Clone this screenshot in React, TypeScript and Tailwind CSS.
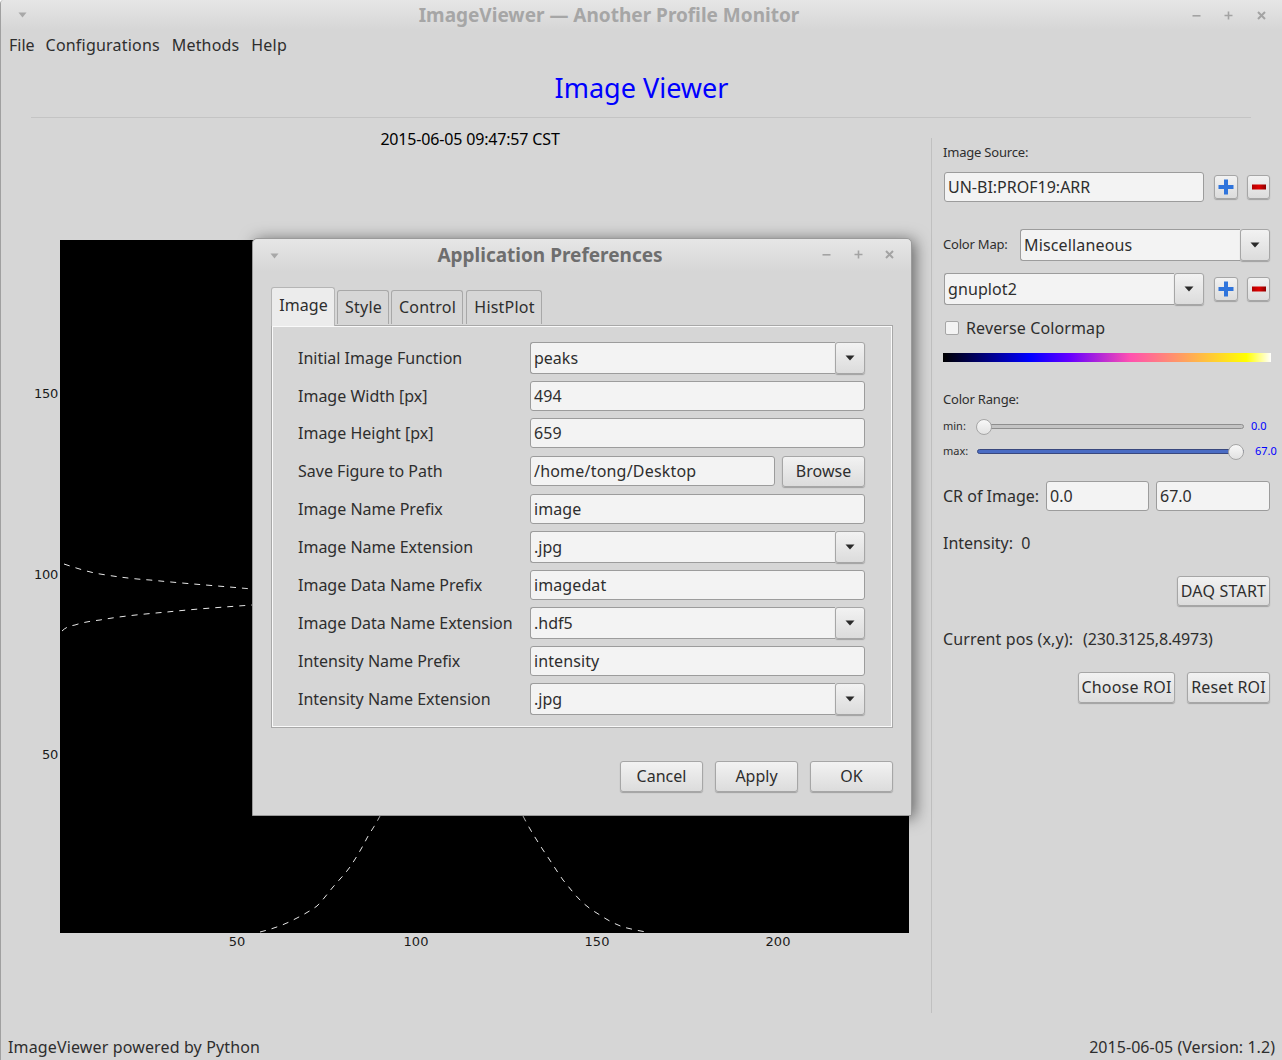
import React from "react";

const Arrow = () => (
  <svg width="10" height="6" viewBox="0 0 10 6"><path d="M0.5 0.5H9.5L5 5.5Z" fill="#2a2a2a" /></svg>
);

const btn = "bg-gradient-to-b from-[#f2f2f2] to-[#dcdcdc] border border-[#a6a6a6] rounded-[3px] shadow-[0_1px_1px_rgba(0,0,0,0.25)] text-[#2e2e2e] flex items-center justify-center";

function Field({ value, className = "" }: { value: string; className?: string }) {
  return (
    <div className={`h-[30px] bg-[#f3f3f3] border border-[#9c9c9c] rounded-[3px] pl-[3px] flex items-center text-[#2e2e2e] ${className}`}>
      {value}
    </div>
  );
}

function Combo({ value, className = "" }: { value: string; className?: string }) {
  return (
    <div className={`h-[32px] flex ${className}`}>
      <div className="flex-1 bg-[#f3f3f3] border border-r-0 border-[#9c9c9c] rounded-l-[3px] pl-[3px] flex items-center text-[#2e2e2e]">{value}</div>
      <div className={`w-[30px] ${btn}`}><Arrow /></div>
    </div>
  );
}

function PlusMinus() {
  return (
    <div className="flex gap-[9px]">
      <div className={`w-[24px] h-[24px] ${btn}`}>
        <svg width="16" height="16" viewBox="0 0 16 16">
          <path d="M6 0.5H10V6H15.5V10H10V15.5H6V10H0.5V6H6Z" fill="#2f74dc" />
        </svg>
      </div>
      <div className={`w-[23px] h-[24px] ${btn}`}>
        <svg width="14" height="6" viewBox="0 0 14 6">
          <defs>
            <linearGradient id="red" x1="0" x2="1" y1="0" y2="0">
              <stop offset="0" stopColor="#b00000" />
              <stop offset="0.5" stopColor="#e00000" />
              <stop offset="1" stopColor="#8c0000" />
            </linearGradient>
          </defs>
          <rect x="0" y="0.5" width="14" height="5" fill="url(#red)" />
        </svg>
      </div>
    </div>
  );
}

function WinButtons({ lastGap }: { lastGap: string }) {
  return (
    <div className="flex items-center">
      <svg width="9" height="9" viewBox="0 0 9 9"><rect x="0.5" y="4" width="8" height="1.6" fill="#a3a3a3" /></svg>
      <svg className="ml-[23px]" width="9" height="9" viewBox="0 0 9 9"><path d="M3.7 0.5H5.3V3.7H8.5V5.3H5.3V8.5H3.7V5.3H0.5V3.7H3.7Z" fill="#a3a3a3" /></svg>
      <svg className={lastGap} width="9" height="9" viewBox="0 0 9 9"><path d="M1 1L8 8M8 1L1 8" stroke="#a3a3a3" strokeWidth="2" /></svg>
    </div>
  );
}

function MenuTriangle() {
  return <svg width="9" height="6" viewBox="0 0 9 6"><path d="M0.5 0.5H8.5L4.5 5.5Z" fill="#a8a8a8" /></svg>;
}

function Slider({ label, value, max }: { label: string; value: string; max?: boolean }) {
  return (
    <div className="flex items-center h-[25px] text-[11px] text-[#2e2e2e] whitespace-nowrap">
      <span className="w-[34px] shrink-0">{label}</span>
      <div className={`relative w-[267px] shrink-0 h-[5px] rounded-full border ${max ? "border-[#39487e] bg-[#4a6cc4]" : "border-[#8e8e8e] bg-[#c4c4c4]"}`}>
        <div className={`absolute top-[-6px] w-[16px] h-[16px] rounded-full border border-[#a6a6a6] bg-gradient-to-b from-[#f8f8f8] to-[#e2e2e2] ${max ? "right-[-1px]" : "left-[-2px]"}`} />
      </div>
      <span className={`text-[#0000ff] ${max ? "ml-[11px]" : "ml-[7px]"}`}>{value}</span>
    </div>
  );
}

const tickX = [
  { t: "50", x: 177 },
  { t: "100", x: 356 },
  { t: "150", x: 537 },
  { t: "200", x: 718 },
];
const tickY = [
  { t: "150", y: 154 },
  { t: "100", y: 335 },
  { t: "50", y: 515 },
];

const rows: { label: string; kind: "combo" | "field" | "browse"; value: string }[] = [
  { label: "Initial Image Function", kind: "combo", value: "peaks" },
  { label: "Image Width [px]", kind: "field", value: "494" },
  { label: "Image Height [px]", kind: "field", value: "659" },
  { label: "Save Figure to Path", kind: "browse", value: "/home/tong/Desktop" },
  { label: "Image Name Prefix", kind: "field", value: "image" },
  { label: "Image Name Extension", kind: "combo", value: ".jpg" },
  { label: "Image Data Name Prefix", kind: "field", value: "imagedat" },
  { label: "Image Data Name Extension", kind: "combo", value: ".hdf5" },
  { label: "Intensity Name Prefix", kind: "field", value: "intensity" },
  { label: "Intensity Name Extension", kind: "combo", value: ".jpg" },
];

function Dialog() {
  return (
    <div className="absolute left-[251px] top-[238px] w-[660px] h-[578px] bg-[#d6d6d6] border border-[#9a9a9a] rounded-t-[5px] shadow-[3px_2px_16px_rgba(0,0,0,0.55)] px-[18px] flex flex-col">
      <div className="h-[33px] -mx-[18px] px-[17px] relative flex items-center bg-gradient-to-b from-[#e6e6e6] to-[#d6d6d6] rounded-t-[5px]">
        <MenuTriangle />
        <span className="absolute left-0 right-[64px] text-center text-[19px] font-bold text-[#6e6e6e]">Application Preferences</span>
        <div className="ml-auto pb-[2px]"><WinButtons lastGap="ml-[22px]" /></div>
      </div>
      <div className="flex items-end h-[39px] mt-[15px] -mb-px relative z-10">
        <div className="w-[64px] h-[39px] pb-[5px] pl-[1px] tracking-[0.1px] bg-[#ececec] border border-[#b5b5b5] border-b-0 rounded-t-[3px] flex items-center justify-center text-[#2e2e2e]">Image</div>
        {[
          { t: "Style", w: "w-[52px] ml-[2px]" },
          { t: "Control", w: "w-[72px] ml-[2px]" },
          { t: "HistPlot", w: "w-[76px] ml-[3px]" },
        ].map((tab) => (
          <div key={tab.t} className={`${tab.w} h-[34px] mb-[2px] pb-[2px] pl-[1px] tracking-[0.2px] bg-[#d6d6d6] border border-[#a8a8a8] border-b-0 rounded-t-[3px] flex items-center justify-center text-[#2e2e2e]`}>{tab.t}</div>
        ))}
      </div>
      <div className="w-[622px] h-[403px] border border-[#a8a8a8] shadow-[inset_1px_1px_0_#fafafa,inset_-1px_-1px_0_#fafafa] pl-[26px] pr-[27px] pt-[12.7px]">
        {rows.map((r) => (
          <div key={r.label} className="h-[37.9px] flex items-center">
            <span className="w-[232px] text-[#2e2e2e] whitespace-nowrap">{r.label}</span>
            {r.kind === "combo" && <Combo value={r.value} className="w-[335px]" />}
            {r.kind === "field" && <Field value={r.value} className="w-[335px] tracking-[0.1px]" />}
            {r.kind === "browse" && (
              <div className="flex w-[335px] gap-[7px]">
                <Field value={r.value} className="flex-1 tracking-[0.2px]" />
                <div className={`w-[83px] h-[31px] pb-px ${btn}`}>Browse</div>
              </div>
            )}
          </div>
        ))}
      </div>
      <div className="flex justify-end gap-[12px] mt-[33px]">
        {["Cancel", "Apply", "OK"].map((b) => (
          <div key={b} className={`w-[83px] h-[31px] pb-px ${btn}`}>{b}</div>
        ))}
      </div>
    </div>
  );
}

export default function App() {
  return (
    <div className="relative w-[1282px] h-[1060px] overflow-hidden bg-[#d6d6d6] border-l border-[#a0a0a0] rounded-tl-[4px] font-['Noto_Sans',sans-serif] text-[16px] flex flex-col text-[#2e2e2e]">
      <div className="h-[30px] relative flex items-center px-[17px] bg-gradient-to-b from-[#e6e6e6] to-[#d6d6d6]">
        <MenuTriangle />
        <span className="absolute left-0 right-[65px] text-center text-[19px] font-bold text-[#a6a6a6]">ImageViewer — Another Profile Monitor</span>
        <div className="ml-auto mr-[-1px]"><WinButtons lastGap="ml-[24px]" /></div>
      </div>
      <div className="h-[30px] flex items-center pl-[8px] gap-[12px]">
        <span className="-mr-px">File</span>
        <span className="tracking-[0.2px]">Configurations</span>
        <span className="tracking-[0.15px]">Methods</span>
        <span className="tracking-[0.2px]">Help</span>
      </div>
      <div className="h-[58px] ml-[30px] w-[1220px] pl-[1px] border-b border-[#c4c4c4] flex items-center justify-center text-[27px] text-[#0000ff]">Image Viewer</div>
      <div className="flex h-[895px] pt-[20px]">
        <div className="w-[931px] shrink-0 h-[875px] border-r border-[#c0c0c0] flex flex-col">
          <div className="pl-[8px] text-center text-black leading-[22px] -mt-[10px] tracking-[-0.17px]">2015-06-05 09:47:57 CST</div>
          <div className="relative ml-[59px] mt-[90px] w-[849px] h-[693px] bg-black font-['DejaVu_Sans',sans-serif] text-[13px] text-[#1a1a1a]">
            <svg className="absolute inset-0" width="849" height="693" viewBox="60 240 849 693">
              <g fill="none" stroke="#e8e8e8" strokeWidth="1" strokeDasharray="6 6">
                <path d="M64 564 C76 568 88 572 100 574 C118 577 134 579 150 580 C190 584 220 586 252 589" />
                <path d="M62 631 C66 627 70 626 75 625 C84 622 92 621 100 620 C122 616 145 614 167 612 C195 609 225 607 252 605" />
                <path d="M260 932 C272 929 284 925 295 919 C303 915 310 911 317 906 C323 900 328 893 333 887 C339 880 345 874 350 867 C356 858 362 848 367 838 C371 831 376 824 380 816" />
                <path d="M523 816 C529 828 536 839 543 850 C550 860 556 870 563 880 C569 887 574 894 580 900 C586 906 593 911 600 915 C607 920 615 924 623 927 C631 929 639 931 647 932" />
              </g>
            </svg>
            {tickX.map((t) => (
              <span key={t.t} className="absolute top-[692px] -translate-x-1/2" style={{ left: t.x }}>{t.t}</span>
            ))}
            {tickY.map((t) => (
              <span key={t.t} className="absolute right-[851px] -translate-y-1/2 tracking-[-0.3px]" style={{ top: t.y }}>{t.t}</span>
            ))}
          </div>
        </div>
        <div className="w-[338px] shrink-0 ml-[11px] relative">
          <div className="text-[13px] leading-[18px] mt-[5px] mb-[11px] tracking-[-0.2px]">Image Source:</div>
          <div className="flex items-center">
            <Field value="UN-BI:PROF19:ARR" className="w-[260px] ml-[1px]" />
            <div className="ml-[10px]"><PlusMinus /></div>
          </div>
          <div className="flex items-center mt-[27px]">
            <span className="w-[77px] text-[13px] tracking-[-0.2px]">Color Map:</span>
            <Combo value="Miscellaneous" className="w-[250px] tracking-[0.15px]" />
          </div>
          <div className="flex items-center mt-[12px]">
            <Combo value="gnuplot2" className="w-[260px] ml-[1px] tracking-[0.1px]" />
            <div className="ml-[10px]"><PlusMinus /></div>
          </div>
          <div className="flex items-center mt-[12px] h-[22px] ml-[2px]">
            <div className="w-[14px] h-[14px] bg-[#f3f3f3] border border-[#a6a6a6] rounded-[2px]" />
            <span className="ml-[7px] tracking-[0.12px]">Reverse Colormap</span>
          </div>
          <div className="mt-[14px] w-[328px] h-[9px] bg-[linear-gradient(90deg,#000000_0%,#0000ff_26.5%,#6600ff_38.7%,#ff50b0_57%,#ff9966_72%,#ffff00_92.5%,#ffffff_100%)]" />
          <div className="text-[13px] leading-[18px] mt-[28px] tracking-[-0.2px]">Color Range:</div>
          <div className="mt-[6px]">
            <Slider label="min:" value="0.0" />
            <Slider label="max:" value="67.0" max />
          </div>
          <div className="flex items-center mt-[17px] h-[30px]">
            <span className="w-[103px] whitespace-nowrap">CR of Image:</span>
            <Field value="0.0" className="w-[103px]" />
            <Field value="67.0" className="w-[114px] ml-[7px]" />
          </div>
          <div className="mt-[20px] h-[24px] flex items-center">Intensity:&nbsp;&nbsp;0</div>
          <div className="flex justify-end w-[327px] mt-[21px]">
            <div className={`w-[93px] h-[30px] tracking-[0.2px] ${btn}`}>DAQ START</div>
          </div>
          <div className="mt-[21px] h-[24px] flex items-center whitespace-nowrap">
            <span className="w-[140px] tracking-[0.12px]">Current pos (x,y):</span>
            <span className="tracking-[-0.15px]">(230.3125,8.4973)</span>
          </div>
          <div className="flex justify-end gap-[12px] w-[327px] mt-[21px]">
            <div className={`w-[97px] h-[31px] pb-px tracking-[0.2px] ${btn}`}>Choose ROI</div>
            <div className={`w-[83px] h-[31px] pb-px tracking-[0.1px] ${btn}`}>Reset ROI</div>
          </div>
        </div>
      </div>
      <div className="absolute left-[7px] right-[7px] top-[1036px] flex justify-between leading-[22px]">
        <span className="tracking-[0.14px]">ImageViewer powered by Python</span>
        <span className="tracking-[0.05px]">2015-06-05 (Version: 1.2)</span>
      </div>
      <Dialog />
    </div>
  );
}
